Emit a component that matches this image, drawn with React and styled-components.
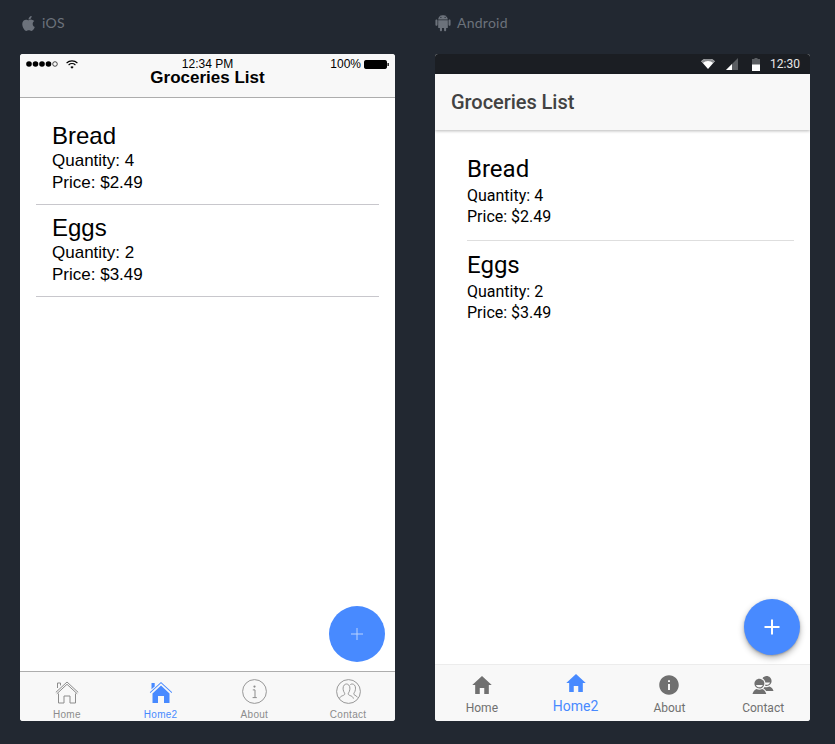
import React from "react";
import styled, { createGlobalStyle } from "styled-components";
import { FaApple } from "react-icons/fa";
import { IoLogoAndroid, IoMdHome, IoMdInformationCircle, IoMdContacts, IoMdAdd } from "react-icons/io";

const Global = createGlobalStyle`
  html, body { margin: 0; padding: 0; background: #222831; }
  #root { width: 835px; height: 744px; overflow: hidden; }
`;

const Page = styled.div`
  display: grid;
  grid-template-columns: 375px 375px;
  column-gap: 40px;
  padding: 0 25px 0 20px;
  height: 744px;
  box-sizing: border-box;
  background: #222831;
`;
const Column = styled.section`
  display: flex;
  flex-direction: column;
`;
const PlatformLabel = styled.div`
  height: 54px;
  display: flex;
  align-items: center;
  gap: 6px;
  padding: 0 0 8px 0;
  box-sizing: border-box;
  font: 400 14px/16px Lato, sans-serif;
  letter-spacing: 0.25px;
  color: #6c727b;
  svg {
    width: ${(p) => p.$icon};
    height: ${(p) => p.$icon};
    margin: ${(p) => p.$iconMargin};
    fill: #6c727b;
    flex: none;
  }
`;
const Phone = styled.div`
  height: 667px;
  border-radius: 3px;
  background: #fff;
  overflow: hidden;
  position: relative;
  display: flex;
  flex-direction: column;
`;

/* iOS */
const IosHeader = styled.header`
  height: 44px;
  box-sizing: border-box;
  background: #f8f8f8;
  border-bottom: 1px solid #adadad;
  padding: 3px 6px 0;
  position: relative;
  color: #000;
  font-family: "Liberation Sans", Arial, sans-serif;
`;
const IosStatus = styled.div`
  display: grid;
  grid-template-columns: 1fr auto 1fr;
  align-items: center;
  height: 14px;
  font-size: 12px;
  line-height: 14px;
`;
const StatusLeft = styled.div`
  display: flex;
  align-items: center;
  gap: 6px;
`;
const StatusRight = styled.div`
  display: flex;
  align-items: center;
  justify-content: flex-end;
  gap: 3px;
`;
const IosTitle = styled.h1`
  margin: -3px 0 0;
  text-align: center;
  font-size: 17px;
  line-height: 20px;
  font-weight: 700;
`;
const Content = styled.main`
  flex: 1;
  min-height: 0;
  position: relative;
  padding: ${(p) => p.$pad};
`;
const Item = styled.article`
  padding: ${(p) => p.$pad};
  border-bottom: ${(p) => p.$line};
  color: #000;
  font-family: ${(p) => p.$font};
`;
const ItemName = styled.h2`
  margin: 0 0 ${(p) => p.$gap} 0;
  font-weight: 400;
  font-size: 24px;
  line-height: 28px;
`;
const ItemLine = styled.p`
  margin: 0;
  font-size: ${(p) => p.$size};
  line-height: ${(p) => p.$lh};
`;
const Fab = styled.button`
  position: absolute;
  right: 10px;
  width: 56px;
  height: 56px;
  bottom: ${(p) => p.$bottom};
  border: 0;
  padding: 0;
  border-radius: 50%;
  background: #488aff;
  color: ${(p) => p.$color};
  display: flex;
  align-items: center;
  justify-content: center;
  box-shadow: ${(p) => p.$shadow};
`;
const TabBar = styled.nav`
  display: grid;
  grid-template-columns: repeat(4, 1fr);
  background: #f8f8f8;
  height: ${(p) => p.$h};
  box-sizing: border-box;
  border-top: ${(p) => p.$border};
`;
const Tab = styled.div`
  display: flex;
  flex-direction: column;
  align-items: center;
  color: ${(p) => p.$color};
  padding-top: ${(p) => p.$top};
`;
const IconSlot = styled.div`
  height: ${(p) => p.$h};
  display: flex;
  align-items: center;
  justify-content: center;
`;
const IosTabLabel = styled.span`
  font: 400 10px/12px "Liberation Sans", Arial, sans-serif;
  letter-spacing: 0.3px;
  margin-top: 5px;
`;
const AndroidTabLabel = styled.span`
  font: 400 ${(p) => (p.$active ? "14px/16px" : "12px/14px")} Roboto, sans-serif;
  margin-top: ${(p) => (p.$active ? "3px" : "4px")};
`;

/* Android */
const AndroidStatus = styled.div`
  height: 20px;
  background: #1b1e23;
  display: flex;
  align-items: center;
  justify-content: flex-end;
  gap: 0;
  padding-right: 10px;
  color: #fff;
  font: 400 12px/14px Roboto, sans-serif;
`;
const StatusTime = styled.span`
  margin-left: 10px;
  color: #e8e8e8;
`;
const StatusGlyph = styled.svg`
  display: block;
  margin-right: ${(p) => p.$mr || 0};
`;
const AndroidHeader = styled.header`
  height: 56px;
  background: #f8f8f8;
  display: flex;
  align-items: center;
  padding: 0 16px;
  position: relative;
  z-index: 1;
  box-shadow: 0 1px 3px rgba(0, 0, 0, 0.28);
  font: 500 20px/24px Roboto, sans-serif;
  letter-spacing: -0.05px;
  color: #424242;
`;

/* drawings */
const SignalDots = () => (
  <svg width="34" height="8" viewBox="0 0 34 8">
    {[3, 9.5, 16, 22.5].map((x) => (
      <circle key={x} cx={x} cy="4" r="2.8" fill="#000" />
    ))}
    <circle cx="29" cy="4" r="2.3" fill="none" stroke="#000" strokeWidth="0.7" />
  </svg>
);
const IosWifi = () => (
  <svg width="12" height="9" viewBox="0 0 12 9" fill="none" stroke="#000">
    <path d="M.6 3A7.8 7.8 0 0 1 11.4 3" strokeWidth="1.1" />
    <path d="M2.6 5a5 5 0 0 1 6.8 0" strokeWidth="1.1" />
    <path d="M6 8.8 4.4 6.9a2.4 2.4 0 0 1 3.2 0Z" fill="#000" stroke="none" />
  </svg>
);
const IosBattery = () => (
  <svg width="25" height="9" viewBox="0 0 25 9">
    <rect x=".5" y=".5" width="22" height="8" rx="1.2" fill="#000" stroke="#000" />
    <rect x="23.5" y="3" width="1.3" height="3" fill="#000" />
  </svg>
);
const OutlineHome = () => (
  <svg width="24" height="24" viewBox="0 0 24 24" fill="none" stroke="currentColor" strokeWidth="1">
    <path d="M.8 12.4 12 2l11.2 10.4" />
    <path d="M1.800 13.800 12 4.300l10.200 9.500" />
    <path d="M2.500 8V3h3v2.400" />
    <path d="M3.500 13.500V23h5.500v-7h6v7h5.500v-9.500" />
  </svg>
);
const FilledHome = () => (
  <svg width="24" height="24" viewBox="0 0 24 24" fill="currentColor">
    <path d="M.8 12.200 12 2l11.200 10.200-.6.7L12 3.300 1.400 12.900z" />
    <path d="M2.500 3h3.200v3.400L2.500 9.300z" />
    <path d="M3.500 13.400 12 5.400l8.500 8V23H15v-7H9v7H3.500z" />
  </svg>
);
const OutlineInfo = () => (
  <svg width="25" height="25" viewBox="0 0 25 25" fill="none" stroke="currentColor">
    <circle cx="12.500" cy="12.500" r="11.900" strokeWidth="0.9" />
    <circle cx="12.500" cy="7.600" r="1.100" fill="currentColor" stroke="none" />
    <path d="M10.800 10.900h2.200v7.600M10.600 18.600h4.200" strokeWidth="1" />
  </svg>
);
const OutlineContact = () => (
  <svg width="25" height="25" viewBox="0 0 25 25" fill="none" stroke="currentColor" strokeWidth="0.9">
    <circle cx="12.500" cy="12.500" r="11.900" />
    <path d="M3.600 19.600c.3-1.800 1.600-2.400 3.200-3 1.200-.5 2-.9 2-1.800 0-.8-.7-1.200-1.100-2.300-.5-1.200-.6-2.400-.6-3.400C7.100 6.500 8.900 5 10.500 5s3.400 1.500 3.400 4.100c0 1-.1 2.200-.6 3.400-.4 1.100-1.100 1.500-1.100 2.300 0 .9.800 1.300 2 1.800 1.600.6 2.900 1.200 3.200 3" />
    <path d="M14.300 5.600c.6-.4 1.200-.6 1.900-.6 1.700 0 3.300 1.500 3.300 4.100 0 1-.1 2.200-.6 3.400-.4 1.100-1.100 1.500-1.100 2.300 0 .7.400 1.100 1.200 1.500 1 .5 2.100 1 2.400 2.100" />
  </svg>
);

const groceries = [
  { name: "Bread", qty: 4, price: "$2.49" },
  { name: "Eggs", qty: 2, price: "$3.49" },
];

const iosTabs = [
  { label: "Home", Icon: OutlineHome },
  { label: "Home2", Icon: FilledHome, active: true },
  { label: "About", Icon: OutlineInfo },
  { label: "Contact", Icon: OutlineContact },
];
const androidTabs = [
  { label: "Home", Icon: IoMdHome },
  { label: "Home2", Icon: IoMdHome, active: true },
  { label: "About", Icon: IoMdInformationCircle },
  { label: "Contact", Icon: IoMdContacts },
];

const IosPhone = () => (
  <Phone>
    <IosHeader>
      <IosStatus>
        <StatusLeft>
          <SignalDots />
          <IosWifi />
        </StatusLeft>
        <span>12:34 PM</span>
        <StatusRight>
          100%
          <IosBattery />
        </StatusRight>
      </IosStatus>
      <IosTitle>Groceries List</IosTitle>
    </IosHeader>
    <Content $pad="15px 16px 0">
      {groceries.map((g) => (
        <Item key={g.name} $pad="9px 0 10px 16px" $line="1px solid #c8c7cc" $font={'"Liberation Sans", Arial, sans-serif'}>
          <ItemName $gap="0">{g.name}</ItemName>
          <ItemLine $size="17px" $lh="22px">Quantity: {g.qty}</ItemLine>
          <ItemLine $size="17px" $lh="22px">Price: {g.price}</ItemLine>
        </Item>
      ))}
      <Fab $bottom="9px" $color="#b9d2ff" $shadow="none" aria-label="Add">
        <svg width="12" height="12" viewBox="0 0 12 12" stroke="currentColor" strokeWidth="1">
          <path d="M6 0v12M0 6h12" />
        </svg>
      </Fab>
    </Content>
    <TabBar $h="50px" $border="1px solid #adadad">
      {iosTabs.map(({ label, Icon, active }) => (
        <Tab key={label} $top="7px" $color={active ? "#488aff" : "#8c8c8c"}>
          <IconSlot $h="25px"><Icon /></IconSlot>
          <IosTabLabel>{label}</IosTabLabel>
        </Tab>
      ))}
    </TabBar>
  </Phone>
);

const AndroidPhone = () => (
  <Phone>
    <AndroidStatus>
      <StatusGlyph $mr="11px" width="14" height="10" viewBox="0 0 14 10">
        <path d="M.2 2.200A10 10 0 0 1 13.800 2.200L7 10z" fill="#fff" />
        <path d="M.2 2.200A10 10 0 0 1 13.800 2.200L12.200 4A8 8 0 0 0 1.800 4z" fill="#8d8f92" />
      </StatusGlyph>
      <StatusGlyph $mr="14px" width="12" height="12" viewBox="0 0 12 12">
        <path d="M12 0v12H0z" fill="#5b5e62" />
        <path d="M6 6v6H0z" fill="#fff" />
      </StatusGlyph>
      <StatusGlyph width="8" height="13" viewBox="0 0 8 13">
        <path d="M2.500 0h3v1H8v12H0V1h2.500z" fill="#5b5e62" />
        <path d="M0 6.500h8V13H0z" fill="#fff" />
      </StatusGlyph>
      <StatusTime>12:30</StatusTime>
    </AndroidStatus>
    <AndroidHeader>Groceries List</AndroidHeader>
    <Content $pad="15px 16px 0 32px">
      {groceries.map((g, i) => (
        <Item
          key={g.name}
          $pad="10px 0 13px"
          $line={i === 0 ? "1px solid #dedede" : "0"}
          $font="Roboto, sans-serif"
        >
          <ItemName $gap="2px">{g.name}</ItemName>
          <ItemLine $size="16px" $lh="21px">Quantity: {g.qty}</ItemLine>
          <ItemLine $size="16px" $lh="21px">Price: {g.price}</ItemLine>
        </Item>
      ))}
      <Fab $bottom="9px" $color="#fff" $shadow="0 3px 6px rgba(0,0,0,0.3), 0 1px 2px rgba(0,0,0,0.2)" aria-label="Add">
        <IoMdAdd size={24} />
      </Fab>
    </Content>
    <TabBar $h="57px" $border="1px solid #ececec">
      {androidTabs.map(({ label, Icon, active }) => (
        <Tab key={label} $top={active ? "6px" : "8px"} $color={active ? "#488aff" : "#707070"}>
          <IconSlot $h="24px"><Icon size={24} /></IconSlot>
          <AndroidTabLabel $active={active}>{label}</AndroidTabLabel>
        </Tab>
      ))}
    </TabBar>
  </Phone>
);

export default function App() {
  return (
    <>
      <Global />
      <Page>
        <Column>
          <PlatformLabel $icon="17px" $iconMargin="0 -1px 0 0"><FaApple />iOS</PlatformLabel>
          <IosPhone />
        </Column>
        <Column>
          <PlatformLabel $icon="22px" $iconMargin="0 -3px"><IoLogoAndroid />Android</PlatformLabel>
          <AndroidPhone />
        </Column>
      </Page>
    </>
  );
}
